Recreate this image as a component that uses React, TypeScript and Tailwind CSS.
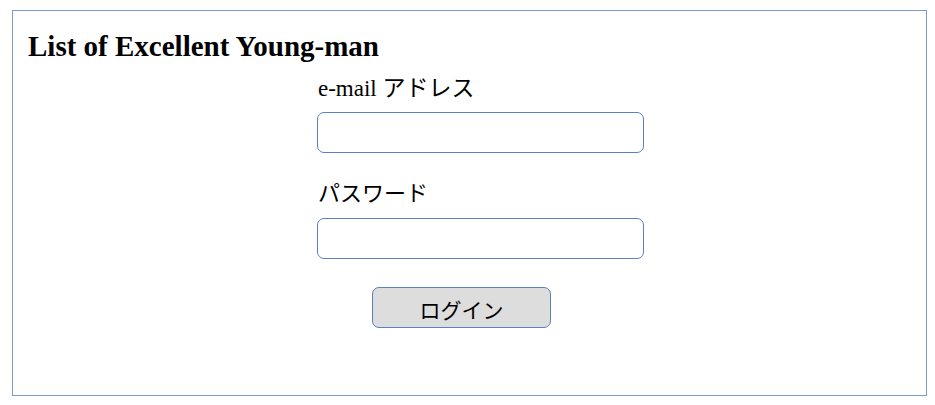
import { useState } from 'react';

export default function App() {
  const [email, setEmail] = useState('');
  const [password, setPassword] = useState('');

  return (
    <div className="pt-[10px] pl-[12px]" style={{ fontFamily: '"Liberation Serif", "Noto Sans CJK JP", serif' }}>
      <div className="w-[915px] h-[386px] border border-[#7d9bc9] text-black">
        <h1 className="pl-[15px] pt-[17px] text-[29px] leading-[36px] font-bold">List of Excellent Young-man</h1>

        <form className="ml-[304px] w-[327px] flex flex-col" onSubmit={(e) => e.preventDefault()}>
          <label className="mt-[13px] text-[23px] leading-[24px] pl-[1px]">e-mail アドレス</label>
          <input
            type="email"
            value={email}
            onChange={(e) => setEmail(e.target.value)}
            className="mt-[11px] h-[41px] w-[327px] rounded-[7px] border border-[#5b80bd] outline-none px-2"
          />

          <label className="mt-[29px] text-[22px] leading-[24px] pl-[1px]">パスワード</label>
          <input
            type="password"
            value={password}
            onChange={(e) => setPassword(e.target.value)}
            className="mt-[12px] h-[41px] w-[327px] rounded-[7px] border border-[#5b80bd] outline-none px-2"
          />

          <div className="mt-[28px] pl-[55px]">
            <button
              type="submit"
              className="w-[179px] h-[41px] rounded-[7px] border border-[#5b80bd] bg-[#dddddd] text-[21px] pt-[8px]"
            >
              ログイン
            </button>
          </div>
        </form>
      </div>
    </div>
  );
}
